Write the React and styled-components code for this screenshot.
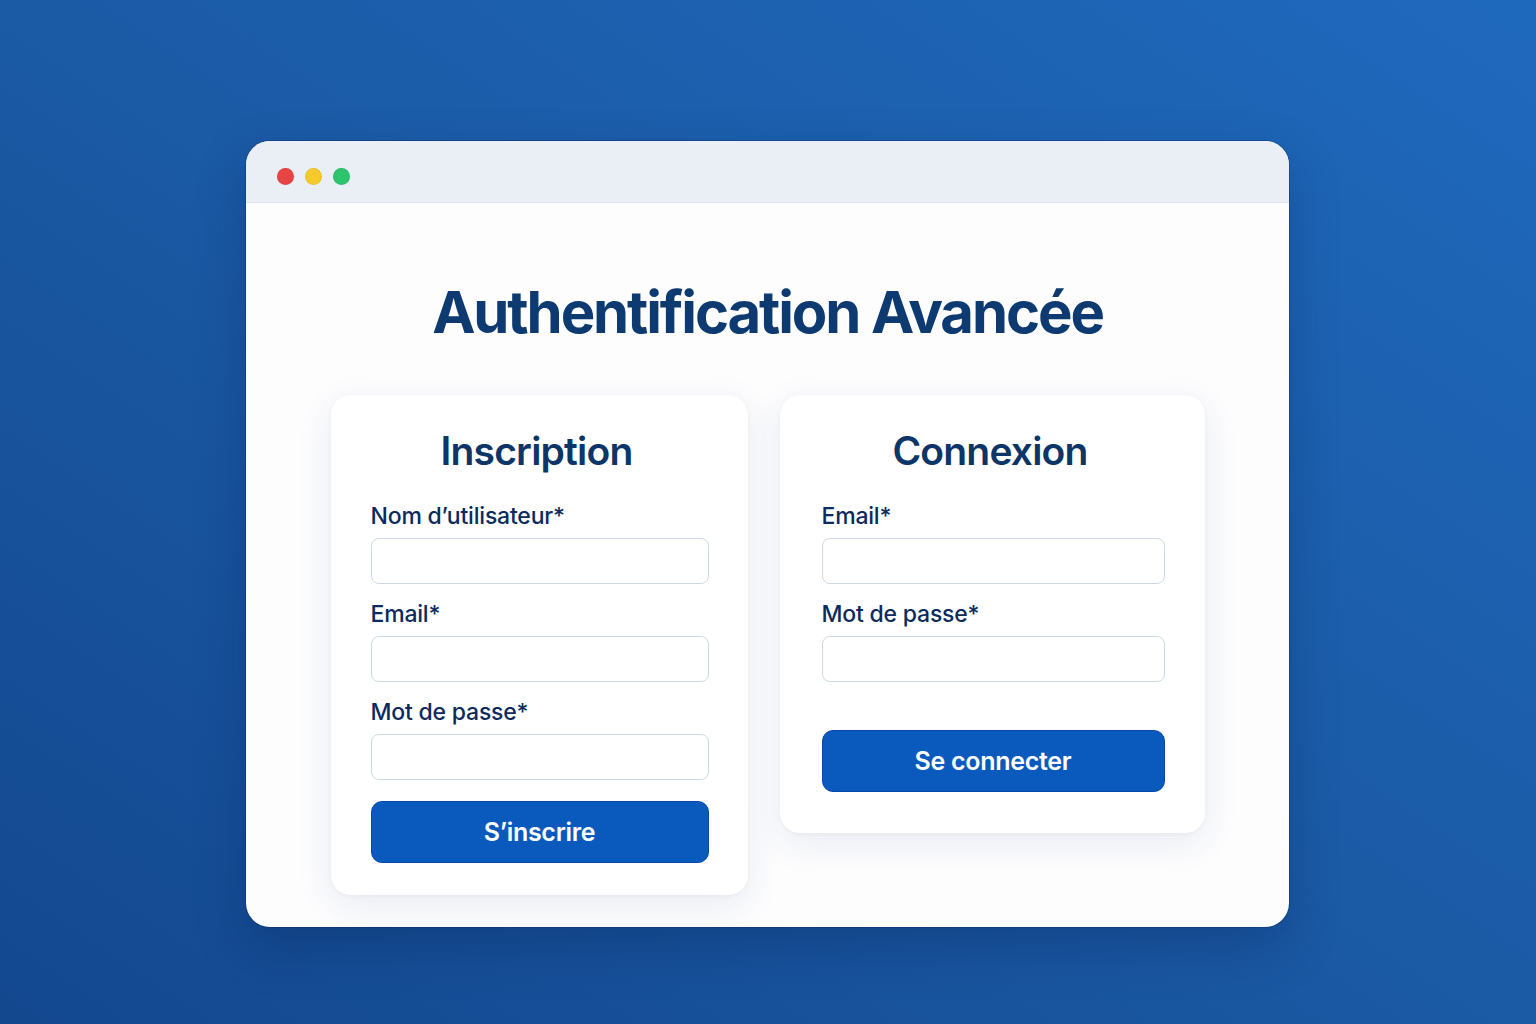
import React from 'react';
import styled, { createGlobalStyle } from 'styled-components';

const GlobalStyle = createGlobalStyle`
  html, body {
    margin: 0;
    padding: 0;
  }
  body {
    font-family: Inter, "Noto Sans", "Liberation Sans", sans-serif;
    background: linear-gradient(to top right, #13488f 0%, #1b5aa5 50%, #1f69bd 100%);
    min-height: 1024px;
  }
  * {
    box-sizing: border-box;
  }
`;

const Page = styled.div`
  width: 1536px;
  height: 1024px;
  padding-top: 141px;
  display: flex;
  justify-content: center;
  align-items: flex-start;
`;

const Window = styled.div`
  width: 1043px;
  height: 786px;
  margin-right: 1px;
  background: #fdfdfe;
  border-radius: 24px;
  overflow: hidden;
  box-shadow: 0 20px 50px rgba(5, 25, 70, 0.25), 0 0 0 1px rgba(10, 40, 110, 0.35);
  display: flex;
  flex-direction: column;
`;

const TitleBar = styled.div`
  height: 62px;
  flex-shrink: 0;
  background: #eaeff6;
  border-bottom: 1px solid #e1e7f0;
  display: flex;
  align-items: center;
  gap: 11px;
  padding: 10px 0 0 31px;
`;

const Dot = styled.span`
  width: 17px;
  height: 17px;
  border-radius: 50%;
  background: ${props => props.color};
  box-shadow: inset 0 0 0 1px rgba(0, 0, 0, 0.06);
`;

const Body = styled.div`
  flex: 1;
  padding-top: 73px;
  display: flex;
  flex-direction: column;
  align-items: center;
`;

const Heading = styled.h1`
  margin: 0;
  font-size: 58px;
  line-height: 72px;
  font-weight: 700;
  color: #0d3a70;
  letter-spacing: -2.1px;
`;

const Cards = styled.div`
  margin-top: 47px;
  display: flex;
  gap: 32px;
  align-items: flex-start;
`;

const Card = styled.div`
  width: ${props => props.width}px;
  background: #ffffff;
  border-radius: 20px;
  padding: 32px ${props => props.padRight}px ${props => props.padBottom}px ${props => props.padLeft}px;
  box-shadow: 0 10px 36px rgba(30, 60, 120, 0.09), 0 1px 4px rgba(30, 60, 120, 0.05);
  display: flex;
  flex-direction: column;
`;

const CardTitle = styled.h2`
  margin: 0 0 27px;
  text-align: center;
  font-size: 39px;
  line-height: 48px;
  font-weight: 600;
  color: #0d3568;
  letter-spacing: -0.8px;
  transform: translateX(-3px);
`;

const Field = styled.div`
  display: flex;
  flex-direction: column;
  gap: 8px;
  & + & {
    margin-top: 16px;
  }
`;

const Label = styled.label`
  font-size: 23px;
  line-height: 28px;
  font-weight: 500;
  color: #0c2b5c;
  letter-spacing: -0.2px;
`;

const Input = styled.input`
  height: 46px;
  width: 100%;
  border: 1.5px solid #cdd7e6;
  border-radius: 8px;
  background: #fff;
  font-family: inherit;
  font-size: 18px;
  padding: 0 12px;
  outline: none;
`;

const Button = styled.button`
  margin-top: ${props => props.gap}px;
  height: 62px;
  width: 100%;
  border: 1px solid #0648a8;
  border-radius: 11px;
  background: #0a5abd;
  color: #ffffff;
  font-family: inherit;
  font-size: 25px;
  font-weight: 600;
  letter-spacing: -0.3px;
  cursor: pointer;
`;

const FormField = ({ label }) => (
  <Field>
    <Label>{label}</Label>
    <Input type="text" />
  </Field>
);

const App = () => (
  <>
    <GlobalStyle />
    <Page>
      <Window>
        <TitleBar>
          <Dot color="#e94444" />
          <Dot color="#f6ca2c" />
          <Dot color="#2ec46e" />
        </TitleBar>
        <Body>
          <Heading>Authentification Avancée</Heading>
          <Cards>
            <Card width={417} padLeft={40} padRight={39} padBottom={32}>
              <CardTitle>Inscription</CardTitle>
              <FormField label="Nom d’utilisateur*" />
              <FormField label="Email*" />
              <FormField label="Mot de passe*" />
              <Button gap={21}>S’inscrire</Button>
            </Card>
            <Card width={425} padLeft={42} padRight={40} padBottom={41}>
              <CardTitle>Connexion</CardTitle>
              <FormField label="Email*" />
              <FormField label="Mot de passe*" />
              <Button gap={48}>Se connecter</Button>
            </Card>
          </Cards>
        </Body>
      </Window>
    </Page>
  </>
);

export default App;
